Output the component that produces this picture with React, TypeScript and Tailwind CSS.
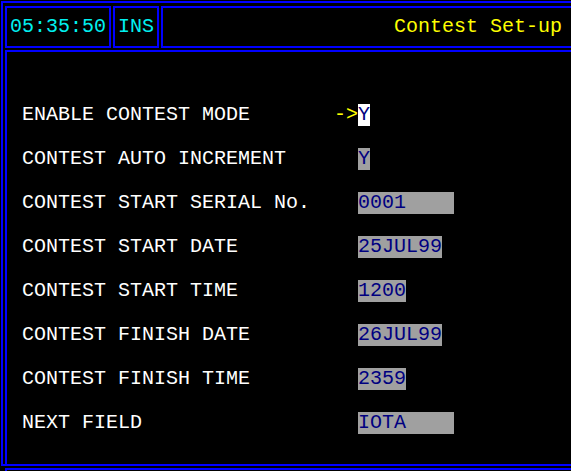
const fields = [
  { label: 'ENABLE CONTEST MODE', value: 'Y', width: 'w-[12px]', active: true },
  { label: 'CONTEST AUTO INCREMENT', value: 'Y', width: 'w-[12px]' },
  { label: 'CONTEST START SERIAL No.', value: '0001', width: 'w-[96px]' },
  { label: 'CONTEST START DATE', value: '25JUL99', width: 'w-[84px]' },
  { label: 'CONTEST START TIME', value: '1200', width: 'w-[48px]' },
  { label: 'CONTEST FINISH DATE', value: '26JUL99', width: 'w-[84px]' },
  { label: 'CONTEST FINISH TIME', value: '2359', width: 'w-[48px]' },
  { label: 'NEXT FIELD', value: 'IOTA', width: 'w-[96px]' },
];

export default function App() {
  return (
    <div className="w-[571px] h-[471px] overflow-hidden bg-black font-['Liberation_Mono',monospace] text-[20px] leading-[22px] whitespace-pre">
      <div className="w-[600px] pt-[1px] pl-[1px] flex flex-col">
        <div className="h-[465px] border-2 border-[#0000ff] pt-[3px] pl-[2px] flex flex-col">
          {/* status bar */}
          <div className="flex h-[42px] gap-[2px]">
            <div className="w-[106px] border-2 border-[#0000ff] flex items-center justify-center text-[#00f0f0]">
              05:35:50
            </div>
            <div className="w-[46px] border-2 border-[#0000ff] flex items-center justify-center text-[#00f0f0]">
              INS
            </div>
            <div className="flex-1 border-2 border-[#0000ff] flex items-center justify-end pr-[34px] text-[#ffff00]">
              Contest Set-up
            </div>
          </div>

          {/* form */}
          <div className="mt-[2px] flex-1 border-t-2 border-l-2 border-r-2 border-[#0000ff] pt-[41px] pl-[15px] flex flex-col">
            {fields.map((f) => (
              <div key={f.label} className="h-[44px] flex items-center">
                <span className="w-[312px] text-white">{f.label}</span>
                <span className="w-[24px] text-[#ffff00]">{f.active ? '->' : ''}</span>
                <span
                  className={`${f.width} h-[22px] text-[#000080] ${f.active ? 'bg-white' : 'bg-[#a0a0a0]'}`}
                >
                  {f.value}
                </span>
              </div>
            ))}
          </div>
        </div>
        <div className="mt-[2px] ml-[4px] h-[10px] border-t-2 border-l-2 border-[#0000ff]" />
      </div>
    </div>
  );
}
